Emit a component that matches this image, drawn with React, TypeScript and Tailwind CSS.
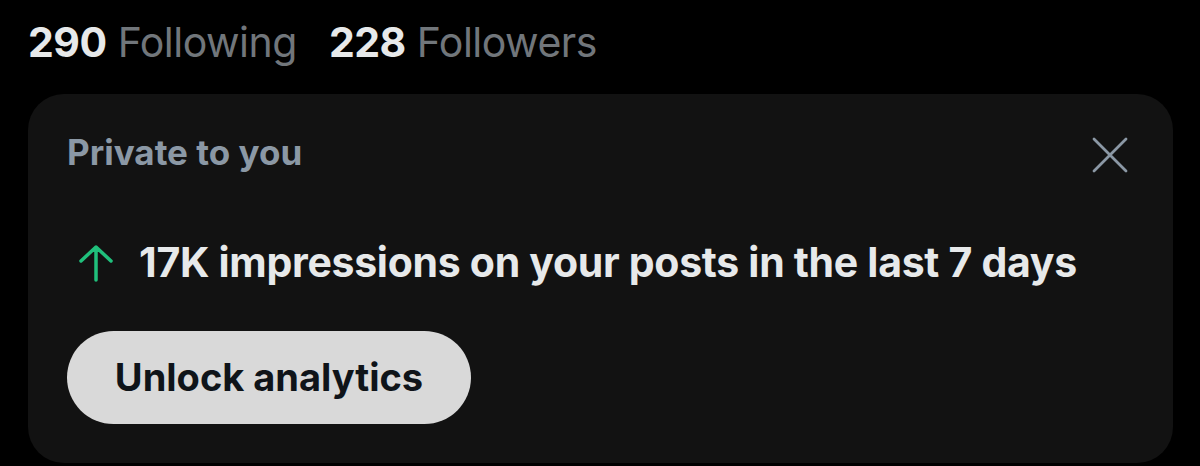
export default function App() {
    return (
        <div className="w-[1200px] h-[466px] bg-black overflow-hidden" style={{ fontFamily: "Inter, 'Liberation Sans', sans-serif" }}>
            <div className="flex items-baseline gap-[32px] pl-[28px] pt-[16px] h-[94px] text-[41px] leading-[52px] tracking-[-0.5px]">
                <div>
                    <span className="font-bold text-[#e7e9ea]">290</span>
                    <span className="text-[#71767b]"> Following</span>
                </div>
                <div>
                    <span className="font-bold text-[#e7e9ea]">228</span>
                    <span className="text-[#71767b]"> Followers</span>
                </div>
            </div>
            <div className="ml-[28px] w-[1145px] h-[369px] rounded-[36px] bg-[#121212] pl-[39px] pr-[45px] pt-[36px] flex flex-col">
                <div className="flex items-center justify-between h-[44px]">
                    <span className="text-[35px] font-bold text-[#8b98a5]">Private to you</span>
                    <svg width="36" height="36" viewBox="0 0 36 36" className="text-[#8b98a5] mt-[6px]">
                        <path d="M2 2 L34 34 M34 2 L2 34" stroke="currentColor" strokeWidth="2.8" strokeLinecap="round" fill="none" />
                    </svg>
                </div>
                <div className="flex items-center gap-[24px] mt-[64px] h-[50px]">
                    <svg width="38" height="38" viewBox="0 0 38 38" className="text-[#20c07c] ml-[10px] shrink-0">
                        <path d="M19 36 L19 3 M4 17 L19 3 L34 17" stroke="currentColor" strokeWidth="3.5" strokeLinecap="round" strokeLinejoin="round" fill="none" />
                    </svg>
                    <span className="text-[41px] font-bold text-[#e7e9ea] tracking-[-0.3px]">17K impressions on your posts in the last 7 days</span>
                </div>
                <button className="mt-[43px] w-[404px] h-[93px] rounded-full bg-[#d9d9d9] text-[#0f1419] text-[38px] font-bold">
                    Unlock analytics
                </button>
            </div>
        </div>
    );
}
